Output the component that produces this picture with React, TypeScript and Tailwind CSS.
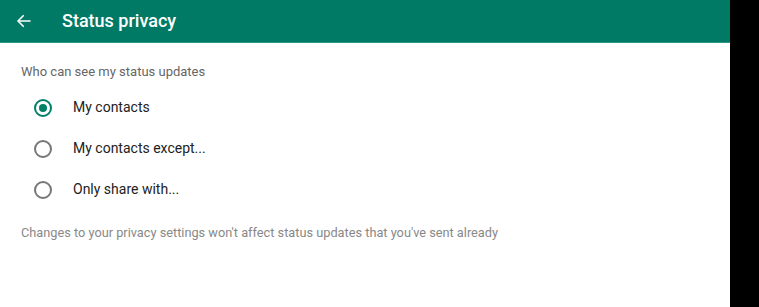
import React from "react";

function Radio({ checked }: { checked: boolean }) {
  return checked ? (
    <div className="w-[18px] h-[18px] rounded-full border-2 border-[#008069] flex items-center justify-center">
      <div className="w-[8px] h-[8px] rounded-full bg-[#008069]" />
    </div>
  ) : (
    <div className="w-[18px] h-[18px] rounded-full border-2 border-[#777]" />
  );
}

export default function App() {
  const options = [
    { label: "My contacts", checked: true },
    { label: "My contacts except...", checked: false },
    { label: "Only share with...", checked: false },
  ];
  return (
    <div className="w-[759px] h-[307px] bg-black flex" style={{ fontFamily: "Roboto, 'Noto Sans', sans-serif" }}>
      <div className="w-[730px] h-full bg-white flex flex-col">
        <div className="h-[43px] bg-[#017a65] flex items-center border-b border-[#2a9a84]">
          <div className="w-[62px] flex items-center pl-[15px]">
            <svg width="18" height="18" viewBox="0 0 24 24" fill="none" stroke="white" strokeWidth="2.2" strokeLinecap="round" strokeLinejoin="round">
              <path d="M20 12H5" />
              <path d="M11 5l-7 7 7 7" />
            </svg>
          </div>
          <div className="text-white text-[18px] font-medium leading-none">Status privacy</div>
        </div>
        <div className="pl-[21px] pt-[20px] text-[13px] text-[#666] leading-[18px]">Who can see my status updates</div>
        <div className="flex flex-col mt-[6px]">
          {options.map((o) => (
            <div key={o.label} className="h-[41px] flex items-center pl-[34px]">
              <Radio checked={o.checked} />
              <div className="ml-[21px] text-[14px] text-[#222]">{o.label}</div>
            </div>
          ))}
        </div>
        <div className="pl-[21px] mt-[14px] text-[12.75px] text-[#888] leading-[18px]">
          Changes to your privacy settings won't affect status updates that you've sent already
        </div>
      </div>
    </div>
  );
}
